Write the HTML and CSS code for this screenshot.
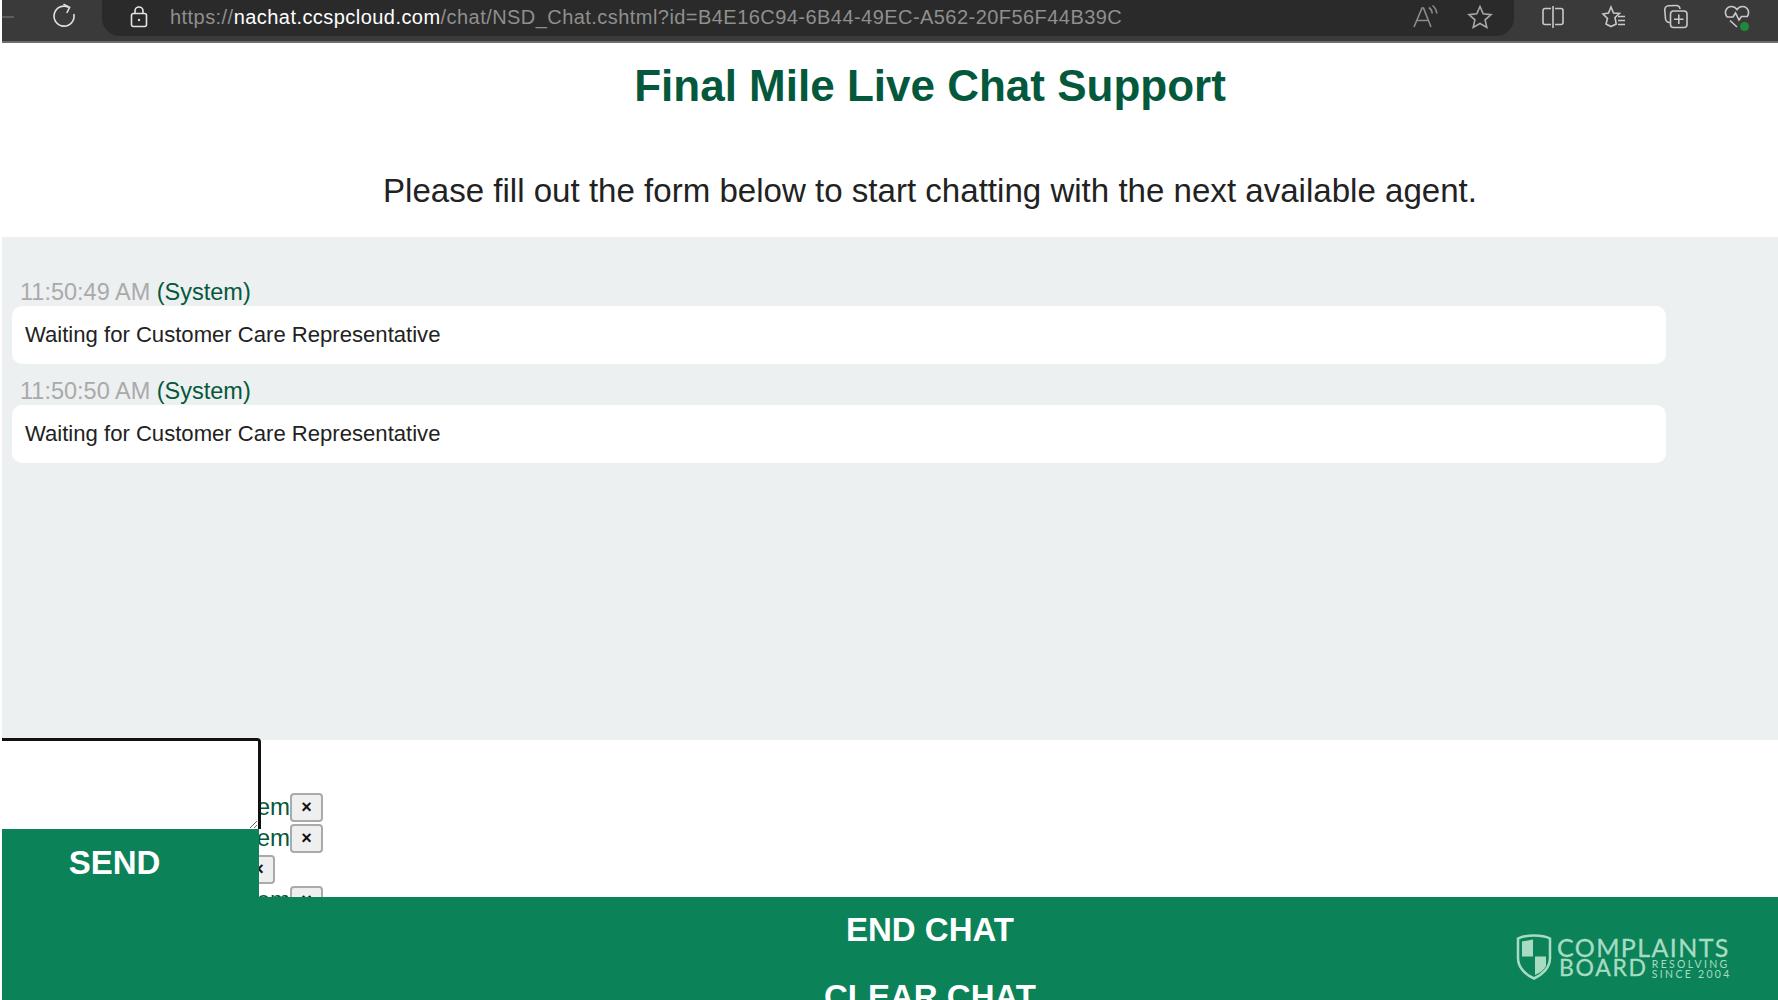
FILE: index.html
```html
<!DOCTYPE html>
<html lang="en">
<head>
  <meta charset="UTF-8" />
  <meta name="viewport" content="width=device-width, initial-scale=1.0"/>
  <title>Final Mile Live Chat Support</title>
  <link rel="stylesheet" href="styles.css">
</head>
<body>

  <div class="toolbar">
    <svg class="icon back" width="14" height="20" viewBox="0 0 14 20"><path d="M0 10H12"/></svg>
    <svg class="icon reload" width="26" height="26" viewBox="0 0 26 26"><path d="M17.5 4.2A10 10 0 1 0 22.8 11"/><path d="M12.5 1.2 18.6 4.4 15.8 10"/></svg>
    <div class="address">
      <svg class="icon lock" width="20" height="24" viewBox="0 0 20 24"><rect x="2.5" y="8.5" width="15" height="13" rx="2"/><path d="M6 8.500V6a4 4 0 0 1 8 0v2.500"/><circle class="dot" cx="10" cy="15" r="1.2"/></svg>
      <div class="url">https://<b>nachat.ccspcloud.com</b>/chat/NSD_Chat.cshtml?id=B4E16C94-6B44-49EC-A562-20F56F44B39C</div>
      <svg class="icon read" width="28" height="26" viewBox="0 0 28 26"><path d="M2 23 10 4h1.500L19 23M5 16.500H16"/><path d="M17 3.500c2 1.500 3 3.500 3.200 6M20.500 1.500c2.500 2 4 5 4.300 8"/></svg>
      <svg class="icon star" width="26" height="26" viewBox="0 0 26 26"><path d="M13 2.500 16.200 9.800 24 10.600 18.100 15.800 19.800 23.500 13 19.500 6.200 23.500 7.900 15.800 2 10.600 9.800 9.800Z"/></svg>
    </div>
    <div class="tools">
      <svg class="icon" width="24" height="24" viewBox="0 0 24 24"><path d="M10 3.500H4a2 2 0 0 0-2 2v12a2 2 0 0 0 2 2h6M14 3.500h6a2 2 0 0 1 2 2v12a2 2 0 0 1-2 2h-6M12 1v22"/></svg>
      <svg class="icon" width="26" height="24" viewBox="0 0 26 24"><path d="M10 2 12.500 8 18.500 8.500 14 12.500 15.200 19 10 21.500 5 19 6.500 13.500 2 9 7.500 8Z"/><path d="M17 11.500H24M17 15.500H24M17 19.500H24"/></svg>
      <svg class="icon" width="26" height="26" viewBox="0 0 26 26"><path d="M7 18.500A4 4 0 0 1 2.500 15L1.800 6A4 4 0 0 1 5.500 1.800L13 1.500A4 4 0 0 1 17 5"/><rect x="7.500" y="7" width="16.500" height="16.500" rx="3"/><path d="M15.800 10.500v9.500M11 15.200h9.500"/></svg>
      <div class="health">
        <svg class="icon" width="26" height="24" viewBox="0 0 26 24"><path d="M3 12C-.5 7 2.500 1.500 7.500 1.500c2.500 0 4.300 1.300 5.500 3 1.200-1.700 3-3 5.500-3 5 0 8 5.500 4.500 10.500M3 12h6l2.500-4 3.500 7 2.500-3.500H23M6 15.500l7 6.500"/></svg>
        <span class="health-dot"></span>
      </div>
    </div>
  </div>

  <h1>Final Mile Live Chat Support</h1>
  <p class="intro">Please fill out the form below to start chatting with the next available agent.</p>

  <div class="messages">
    <div class="msg">
      <div class="meta"><span class="time">11:50:49 AM</span> <span class="sender">(System)</span></div>
      <div class="bubble">Waiting for Customer Care Representative</div>
    </div>
    <div class="msg">
      <div class="meta"><span class="time">11:50:50 AM</span> <span class="sender">(System)</span></div>
      <div class="bubble">Waiting for Customer Care Representative</div>
    </div>
  </div>

  <div class="lower">
    <div class="stale-list">
      <div class="stale"><span>System</span><button>×</button></div>
      <div class="stale"><span>System</span><button>×</button></div>
      <div class="stale short"><span>Sys</span><button>×</button></div>
      <div class="stale"><span>System</span><button>×</button></div>
    </div>
    <div class="composer">
      <textarea></textarea>
      <button class="send">SEND</button>
    </div>
  </div>

  <div class="footer">
    <button class="foot-btn">END CHAT</button>
    <button class="foot-btn">CLEAR CHAT</button>
    <div class="logo">
      <svg width="36" height="46" viewBox="0 0 36 46"><path class="shield" d="M18 1.500C12 1.500 6 2.500 2 4.500V24C2 34 10 41 18 44.500 26 41 34 34 34 24V4.500C30 2.500 24 1.500 18 1.500Z"/><path class="check" d="M6 7.500 17 5.500V22.500H6ZM19 22.500H30V32C28 36 23 39.500 19 41Z"/></svg>
      <div class="logo-text">
        <div class="logo-top">COMPLAINTS</div>
        <div class="logo-row">
          <div class="logo-board">BOARD</div>
          <div class="logo-since">RESOLVING<br>SINCE 2004</div>
        </div>
      </div>
    </div>
  </div>

</body>
</html>
```

FILE: styles.css
```css
html, body {
  height: 1000px;
  overflow: hidden;
}
body {
  margin: 0;
  padding-left: 2px;
  background: #fff;
  font-family: "Liberation Sans", Arial, sans-serif;
  color: #222;
}

/* browser chrome */
.toolbar {
  display: flex;
  align-items: flex-start;
  height: 41px;
  background: #3a3a3a;
  border-bottom: 2px solid #6e6e6e;
}
.icon {
  fill: none;
  stroke: #c9c9c9;
  stroke-width: 1.6;
  flex: none;
}
.icon .dot {
  fill: #d8d8d8;
  stroke: none;
}
.back {
  margin-top: 7px;
  stroke: #666;
}
.reload {
  margin: 3px 0 0 35px;
  stroke: #e0e0e0;
}
.address {
  display: flex;
  align-items: center;
  width: 1412px;
  height: 36px;
  margin-left: 25px;
  padding: 0 21px 2px 27px;
  box-sizing: border-box;
  background: #2a2a2a;
  border-radius: 0 0 18px 18px;
}
.lock {
  margin-right: 21px;
  stroke: #e4e4e4;
}
.url {
  flex: 1;
  font-size: 20px;
  letter-spacing: 0.45px;
  color: #8f8f8f;
  white-space: nowrap;
}
.url b {
  font-weight: normal;
  color: #fff;
}
.read {
  margin-right: 27px;
  stroke: #8c8c8c;
}
.star {
  stroke: #a8a8a8;
}
.tools {
  display: flex;
  align-items: center;
  gap: 36px;
  height: 34px;
  margin-left: 27px;
}
.health {
  position: relative;
  display: flex;
  margin-left: -1px;
}
.health-dot {
  position: absolute;
  right: 1px;
  bottom: -2px;
  width: 9px;
  height: 9px;
  border-radius: 50%;
  background: #1f8a3a;
}

/* heading, centred on a page wider than the window */
h1 {
  margin: 0;
  padding: 18px 0 0 80px;
  height: 50px;
  font-size: 44px;
  line-height: 50px;
  text-align: center;
  color: #04593c;
}
.intro {
  margin: 0;
  padding: 60px 0 0 80px;
  height: 66px;
  font-size: 33.1px;
  line-height: 40px;
  text-align: center;
  color: #222;
}

/* chat log */
.messages {
  height: 503px;
  padding: 39px 0 0 10px;
  box-sizing: border-box;
  background: #edf0f1;
}
.msg {
  width: 1654px;
  margin-bottom: 11px;
}
.meta {
  height: 30px;
  padding-left: 8px;
  font-size: 23.5px;
  line-height: 32px;
}
.time {
  color: #aaa;
}
.sender {
  color: #04593c;
}
.bubble {
  height: 58px;
  padding-left: 13px;
  background: #fff;
  border-radius: 10px;
  font-size: 22.1px;
  line-height: 58px;
  color: #222;
}

/* area under the log */
.lower {
  position: relative;
  height: 157px;
}
.stale-list {
  height: 157px;
  box-sizing: border-box;
  padding: 53px 0 0 160px;
  overflow: hidden;
}
.stale {
  display: flex;
  justify-content: flex-start;
  height: 31px;
  width: 162px;
  font-size: 24px;
  line-height: 28px;
  color: #04593c;
}
.stale span {
  width: 128px;
  text-align: right;
}
.stale button {
  width: 33px;
  height: 29px;
  padding: 0;
  background: #efefef;
  border: 2px solid #aaa;
  border-radius: 4px;
  font-family: "Liberation Sans", Arial, sans-serif;
  font-size: 18px;
  font-weight: bold;
  color: #111;
}
.stale.short span {
  width: 80px;
}
.composer {
  position: absolute;
  left: 0;
  top: -2px;
  width: 260px;
  display: flex;
  flex-direction: column;
}
textarea {
  display: block;
  box-sizing: border-box;
  width: 259px;
  height: 91px;
  margin: 0;
  padding: 4px;
  background: #fff;
  border: 3px solid #111;
  border-left: 0;
  border-bottom: 0;
  border-radius: 0 4px 0 0;
}
.send {
  width: 257px;
  height: 68px;
  padding: 0 32px 0 0;
  background: #0c8259;
  border: 0;
  color: #fff;
  font-family: "Liberation Sans", Arial, sans-serif;
  font-size: 33px;
  font-weight: bold;
  text-align: center;
}

/* footer */
.footer {
  position: relative;
  height: 103px;
  overflow: hidden;
  background: #0c8259;
  display: flex;
  flex-direction: column;
  align-items: center;
  padding: 0 0 0 80px;
  box-sizing: border-box;
}
.foot-btn {
  flex: none;
  height: 67px;
  padding: 0 0 2px;
  background: none;
  border: 0;
  color: #fff;
  font-family: "Liberation Sans", Arial, sans-serif;
  font-size: 33px;
  font-weight: bold;
  line-height: 40px;
}
.logo {
  position: absolute;
  left: 1514px;
  top: 38px;
  display: flex;
  gap: 5px;
  margin-top: -1px;
  color: #a8dcc2;
}
.shield {
  fill: none;
  stroke: #a8dcc2;
  stroke-width: 2.5;
}
.check {
  fill: #a8dcc2;
}
.logo-text {
  font-family: Lato, "Liberation Sans", sans-serif;
  line-height: 1;
  padding-top: 1px;
}
.logo-top {
  font-size: 25px;
  line-height: 24px;
  letter-spacing: 1.4px;
  -webkit-text-stroke: 0.3px #a8dcc2;
}
.logo-row {
  display: flex;
  align-items: flex-start;
  gap: 4px;
  padding-left: 2px;
}
.logo-board {
  font-size: 23px;
  line-height: 20px;
  letter-spacing: 1.700px;
  margin-top: -2px;
  -webkit-text-stroke: 0.3px #a8dcc2;
}
.logo-since {
  font-size: 10.500px;
  line-height: 10px;
  letter-spacing: 2.3px;
}
```
